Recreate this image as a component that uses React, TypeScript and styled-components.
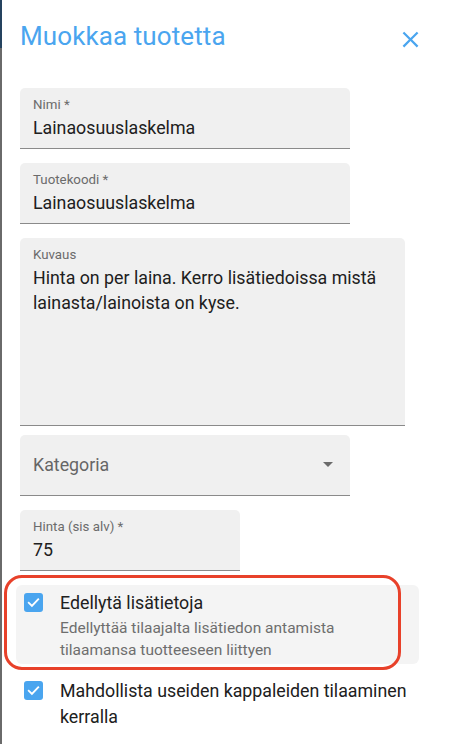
import React from 'react';
import styled, { createGlobalStyle } from 'styled-components';

const GlobalStyle = createGlobalStyle`
  html, body {
    margin: 0;
    padding: 0;
    background: #ffffff;
  }
  body {
    font-family: Roboto, "Noto Sans", "Liberation Sans", sans-serif;
    -webkit-font-smoothing: antialiased;
  }
`;

const Page = styled.div`
  display: flex;
  width: 452px;
  height: 744px;
  overflow: hidden;
`;

const Backdrop = styled.div`
  width: 2px;
  flex-shrink: 0;
  display: flex;
  flex-direction: column;
`;

const BackdropPart = styled.div<{ $color: string; $height?: number }>`
  background: ${(p) => p.$color};
  height: ${(p) => (p.$height ? `${p.$height}px` : 'auto')};
  flex: ${(p) => (p.$height ? '0 0 auto' : '1')};
`;

const Dialog = styled.div`
  flex: 1;
  padding: 0 18px;
  display: flex;
  flex-direction: column;
`;

const Header = styled.div`
  display: flex;
  align-items: center;
  justify-content: space-between;
  height: 72px;
  padding-bottom: 2px;
`;

const Title = styled.h2`
  margin: 0;
  font-size: 26px;
  font-weight: 400;
  color: #4aa5ef;
  letter-spacing: 0.1px;
`;

const CloseButton = styled.button`
  border: 0;
  background: none;
  padding: 0;
  margin-right: 10px;
  margin-top: 6px;
  width: 28px;
  height: 28px;
  display: flex;
  align-items: center;
  justify-content: center;
  color: #4aa5ef;
  cursor: pointer;
`;

const Form = styled.div`
  display: flex;
  flex-direction: column;
  gap: 14px;
  padding-top: 14px;
`;

const Field = styled.div<{ $width: number; $height?: number; $tight?: boolean }>`
  width: ${(p) => p.$width}px;
  height: ${(p) => p.$height ?? 61}px;
  margin-bottom: ${(p) => (p.$tight ? '-5px' : '0')};
  box-sizing: border-box;
  background: #f0f0f0;
  border-radius: 5px 5px 0 0;
  border-bottom: 1px solid #8a8a8a;
  padding: 9px 13px 0 13px;
  display: flex;
  flex-direction: column;
  position: relative;
`;

const Label = styled.div`
  font-size: 13.3px;
  color: #6b6b6b;
  line-height: 16px;
`;

const Value = styled.div`
  font-size: 17.8px;
  color: #202020;
  line-height: 24.5px;
  margin-top: 3px;
`;

const SelectField = styled(Field)`
  padding-top: 0;
  flex-direction: row;
  align-items: center;
  justify-content: space-between;
`;

const Placeholder = styled.div`
  font-size: 17.8px;
  color: #666;
  margin-top: -2px;
`;

const Caret = styled.div`
  width: 0;
  height: 0;
  border-left: 5px solid transparent;
  border-right: 5px solid transparent;
  border-top: 5px solid #6b6b6b;
  margin-right: 4px;
  margin-top: -1px;
`;

const CheckGroup = styled.div`
  position: relative;
  margin: 14px -2px 0 -4px;
  width: 403px;
  border-radius: 6px;
  background: #f4f4f4;
  padding: 5px 0 3px 8px;
  box-sizing: border-box;
  display: flex;
  gap: 17px;
`;

const Highlight = styled.div`
  position: absolute;
  left: -12px;
  top: -10px;
  width: 397px;
  height: 95px;
  box-sizing: border-box;
  border: 3.5px solid #e8412a;
  border-radius: 18px;
  pointer-events: none;
`;

const CheckRow = styled.div`
  display: flex;
  gap: 17px;
  margin-top: 14px;
  margin-left: 4px;
`;

const Box = styled.div`
  width: 19px;
  height: 19px;
  flex-shrink: 0;
  border-radius: 3px;
  background: #4aa5ef;
  display: flex;
  align-items: center;
  justify-content: center;
  margin-top: 3px;
`;

const CheckText = styled.div`
  display: flex;
  flex-direction: column;
`;

const CheckLabel = styled.div`
  font-size: 17.8px;
  color: #202020;
  line-height: 26px;
`;

const Helper = styled.div`
  font-size: 15.5px;
  color: #6e6e6e;
  line-height: 22px;
  margin-top: 1px;
`;

const CheckIcon = () => (
  <svg width="15" height="15" viewBox="0 0 24 24">
    <path
      d="M4.5 12.5 9.5 17.5 19.5 7"
      fill="none"
      stroke="#fff"
      strokeWidth="3"
      strokeLinecap="square"
    />
  </svg>
);

const App = () => {
  return (
    <Page>
      <GlobalStyle />
      <Backdrop>
        <BackdropPart $color="#25435f" $height={48} />
        <BackdropPart $color="#6a6a6a" />
      </Backdrop>
      <Dialog>
        <Header>
          <Title>Muokkaa tuotetta</Title>
          <CloseButton aria-label="Sulje">
            <svg width="27" height="27" viewBox="0 0 24 24">
              <path
                fill="currentColor"
                d="M19 6.41 17.59 5 12 10.59 6.41 5 5 6.41 10.59 12 5 17.59 6.41 19 12 13.41 17.59 19 19 17.59 13.41 12z"
              />
            </svg>
          </CloseButton>
        </Header>
        <Form>
          <Field $width={330}>
            <Label>Nimi *</Label>
            <Value>Lainaosuuslaskelma</Value>
          </Field>
          <Field $width={330}>
            <Label>Tuotekoodi *</Label>
            <Value>Lainaosuuslaskelma</Value>
          </Field>
          <Field $width={385} $height={188} $tight>
            <Label>Kuvaus</Label>
            <Value>
              Hinta on per laina. Kerro lisätiedoissa mistä
              <br />
              lainasta/lainoista on kyse.
            </Value>
          </Field>
          <SelectField $width={330}>
            <Placeholder>Kategoria</Placeholder>
            <Caret />
          </SelectField>
          <Field $width={220}>
            <Label>Hinta (sis alv) *</Label>
            <Value>75</Value>
          </Field>
        </Form>
        <CheckGroup>
          <Highlight />
          <Box>
            <CheckIcon />
          </Box>
          <CheckText>
            <CheckLabel>Edellytä lisätietoja</CheckLabel>
            <Helper>
              Edellyttää tilaajalta lisätiedon antamista
              <br />
              tilaamansa tuotteeseen liittyen
            </Helper>
          </CheckText>
        </CheckGroup>
        <CheckRow>
          <Box>
            <CheckIcon />
          </Box>
          <CheckLabel>
            Mahdollista useiden kappaleiden tilaaminen
            <br />
            kerralla
          </CheckLabel>
        </CheckRow>
      </Dialog>
    </Page>
  );
};

export default App;
